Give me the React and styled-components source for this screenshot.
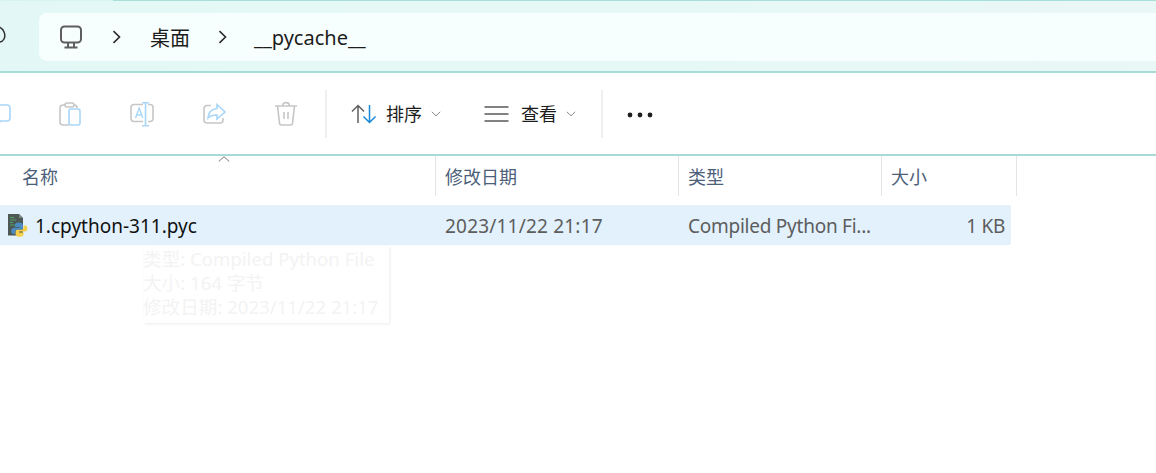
import React from 'react';
import styled, { createGlobalStyle } from 'styled-components';

const GlobalStyle = createGlobalStyle`
  html, body {
    margin: 0;
    padding: 0;
    background: #fff;
  }
  body {
    font-family: "Noto Sans", "Noto Sans CJK SC", sans-serif;
  }
`;

const Page = styled.div`
  position: relative;
  width: 1156px;
  height: 473px;
  overflow: hidden;
  background: #fff;
`;

const AddressStrip = styled.div`
  display: flex;
  align-items: center;
  box-sizing: border-box;
  height: 73px;
  padding: 3px 0 0 39px;
  background: linear-gradient(90deg, #e3f8f6 0%, #e6f8f6 60%, #e9f7f6 100%);
  border-bottom: 2px solid #a6dbd6;
  box-shadow: inset 0 1px 0 #d9f3ef;
`;

const TopEdge = styled.div`
  position: absolute;
  top: 0;
  left: 113px;
  right: 0;
  height: 1px;
  background: #a6e0d9;
`;

const BackIcon = styled.svg`
  position: absolute;
  top: 26px;
  left: -8px;
`;

const Crumbs = styled.div`
  display: flex;
  align-items: center;
  flex: 1;
  height: 48px;
  padding-left: 20px;
  border-radius: 8px 0 0 8px;
  background: #f7fffe;
`;

const CrumbText = styled.span`
  font-size: 20px;
  color: #1c1c1c;
  margin-left: ${p => p.$gap}px;
`;

const CrumbArrow = styled.svg`
  margin-left: ${p => p.$gap}px;
`;

const Toolbar = styled.div`
  display: flex;
  align-items: center;
  box-sizing: border-box;
  height: 83px;
  margin-left: -38px;
  border-bottom: 2px solid #a6dbd6;
`;

const ToolCell = styled.div`
  display: flex;
  align-items: center;
  justify-content: center;
  width: 72px;
  flex: none;
`;

const Divider = styled.div`
  width: 2px;
  height: 48px;
  flex: none;
  margin-left: ${p => p.$left}px;
  background: #efefef;
`;

const Menu = styled.div`
  display: flex;
  align-items: center;
  flex: none;
  margin-left: ${p => p.$left}px;
`;

const MenuLabel = styled.span`
  font-size: 18px;
  line-height: 24px;
  color: #1c1c1c;
  margin-left: ${p => p.$left}px;
`;

const MenuCaret = styled.svg`
  margin-left: 9px;
`;

const Dots = styled.svg`
  margin: 2px 0 0 24px;
  flex: none;
`;

const Columns = styled.div`
  display: grid;
  grid-template-columns: 436px 243px 203px 135px;
  height: 40px;
`;

const HeaderCell = styled.div`
  box-sizing: border-box;
  display: flex;
  align-items: center;
  padding-left: ${p => p.$pad}px;
  font-size: 18px;
  color: #4c607a;
  border-right: 1px solid #e5e5e5;
`;

const SortCaret = styled.svg`
  position: absolute;
  top: 156px;
  left: 218px;
`;

const Row = styled.div`
  display: grid;
  grid-template-columns: 436px 243px 203px 129px;
  align-items: center;
  width: 1011px;
  height: 40px;
  margin-top: 9px;
  border-radius: 0 2px 2px 0;
  background: #e2f1fc;
`;

const NameCell = styled.div`
  display: flex;
  align-items: center;
  padding-left: 7px;
  font-size: 19px;
  color: #111;
`;

const FileName = styled.span`
  margin: 2px 0 0 7px;
`;

const InfoCell = styled.div`
  box-sizing: border-box;
  padding: 2px ${p => p.$right || 0}px 0 ${p => p.$left || 0}px;
  font-size: 19px;
  letter-spacing: ${p => p.$track || 0}px;
  color: #5d5d5d;
  text-align: ${p => p.$align || 'left'};
  white-space: nowrap;
`;

const FadingTip = styled.div`
  position: absolute;
  top: 246px;
  left: 144px;
  box-sizing: border-box;
  width: 245px;
  height: 77px;
  padding-top: 1px;
  background: #fff;
  box-shadow: 1px 1px 3px rgba(0, 0, 0, 0.08);
  font-size: 18.6px;
  line-height: 24px;
  color: #f3f3f3;
  white-space: nowrap;
`;

const TipLine = styled.div`
  margin-left: -1px;
`;

const Chevron = ({ gap }) => (
  <CrumbArrow $gap={gap} width="9" height="14" viewBox="0 0 9 14">
    <path d="M1.5 1.2 L7.5 7 L1.5 12.8" fill="none" stroke="#2b2b2b" strokeWidth="1.6" />
  </CrumbArrow>
);

const Caret = () => (
  <MenuCaret width="10" height="6" viewBox="0 0 10 6">
    <path d="M0.8 0.8 L5 4.8 L9.2 0.8" fill="none" stroke="#8a8a8a" strokeWidth="1" />
  </MenuCaret>
);

const GRAY = '#c6c6c6';
const BLUE = '#a9d6f8';

const ToolIcon = ({ children }) => (
  <ToolCell>
    <svg width="30" height="30" viewBox="0 0 30 30" fill="none" strokeWidth="1.6">
      {children}
    </svg>
  </ToolCell>
);

const PythonFile = () => (
  <svg width="21" height="24" viewBox="0 0 21 24">
    <path d="M1 1 H12 L16 5 V22.5 H1 Z" fill="#4d5753" />
    <path d="M12 1 L16 5 H12 Z" fill="#7c8682" />
    <path d="M3 4.5 H7 M3 7 H9 M3 9.5 H6 M3 12 H8" stroke="#4fa36a" strokeWidth="1" />
    <path d="M12 9.5 C8.5 9.5 8 11 8 12.5 V14 H12.5 V14.8 H6.8 C5 14.8 4.2 16.2 4.2 18 C4.2 19.8 5 21 6.8 21 H8.2 V19 C8.2 17.6 9.2 16.8 10.6 16.8 H14 C15.2 16.8 16 16 16 14.8 V12.5 C16 10.5 14.5 9.5 12 9.5 Z" fill="#4a8cc2" />
    <path d="M12.5 23.8 C16 23.8 16.6 22.4 16.6 21 V19.4 H12 V18.6 H17.8 C19.6 18.6 20.4 17.2 20.4 15.4 C20.4 13.6 19.6 12.4 17.8 12.4 H16.6 V14.4 C16.6 15.8 15.4 16.8 14 16.8 H10.6 C9.4 16.8 8.6 17.6 8.6 18.8 V21 C8.6 22.9 10 23.8 12.5 23.8 Z" fill="#f6cf4a" />
  </svg>
);

export default function App() {
  return (
    <Page>
      <GlobalStyle />
      <AddressStrip>
        <Crumbs>
          <svg width="24" height="24" viewBox="0 0 24 24" fill="none" stroke="#5e5e5e" strokeWidth="2">
            <rect x="2" y="1.5" width="20" height="16" rx="3.5" />
            <path d="M9 18 V21.5 M15 18 V21.5 M5.5 22.5 H18.5" />
          </svg>
          <Chevron gap={29} />
          <CrumbText $gap={29}>桌面</CrumbText>
          <Chevron gap={28} />
          <CrumbText $gap={27}>__pycache__</CrumbText>
        </Crumbs>
      </AddressStrip>
      <TopEdge />
      <BackIcon width="14" height="20" viewBox="0 0 14 20">
        <path d="M7 1 C12 3 14 9 12 13 C11 15 9 16 7 16" fill="none" stroke="#333" strokeWidth="1.5" />
      </BackIcon>

      <Toolbar>
        <ToolIcon>
          <rect x="9" y="6" width="18" height="16" rx="3" stroke={BLUE} />
          <path d="M13 22 V26 L18 22" stroke={BLUE} />
        </ToolIcon>
        <ToolIcon>
          <path d="M14 26 H8 a3 3 0 0 1 -3 -3 V9 a3 3 0 0 1 3 -3 H10 M19 6 H19.5 a3 3 0 0 1 2.5 3" stroke={GRAY} />
          <rect x="10" y="4" width="9" height="4" rx="2" stroke={GRAY} />
          <rect x="14" y="10" width="11" height="16" rx="2" stroke={BLUE} />
        </ToolIcon>
        <ToolIcon>
          <path d="M16 5.5 H7 a3 3 0 0 0 -3 3 V19.5 a3 3 0 0 0 3 3 H16 M21 5.5 H23 a3 3 0 0 1 3 3 V19.5 a3 3 0 0 1 -3 3 H21" stroke={GRAY} />
          <path d="M18.5 4 V26.5 M15 3.8 H22 M15 26.7 H22" stroke={BLUE} />
          <path d="M8.5 19 L12.2 9 L15.8 19 M10 16 H14.5" stroke={BLUE} strokeWidth="1.4" />
        </ToolIcon>
        <ToolIcon>
          <path d="M12 6.5 H8 a3 3 0 0 0 -3 3 V21 a3 3 0 0 0 3 3 H21 a3 3 0 0 0 3 -3 V19" stroke={GRAY} />
          <path d="M18 5.5 L26 13 L18 20 V16 C14 16 11 17 9 19 C9.5 13 13 10 18 9.5 Z" stroke={BLUE} />
        </ToolIcon>
        <ToolIcon>
          <path d="M4 7 H26 M11.5 7 C11.5 2.5 18.5 2.5 18.5 7" stroke={GRAY} />
          <path d="M6.5 7 L8.5 24 a2 2 0 0 0 2 2 H19.5 a2 2 0 0 0 2 -2 L23.5 7 M13 13 V20 M17 13 V20" stroke={GRAY} />
        </ToolIcon>

        <Divider $left={3} />
        <Menu $left={24}>
          <svg width="28" height="20" viewBox="0 0 28 20" fill="none" strokeWidth="1.5">
            <path d="M7 19 V1.5 M1 7.5 L7 1.5 L13 7.5" stroke="#5f5f5f" />
            <path d="M18.5 1 V18.5 M12.5 12.5 L18.5 18.5 L24.5 12.5" stroke="#1a86d8" />
          </svg>
          <MenuLabel $left={7}>排序</MenuLabel>
          <Caret />
        </Menu>
        <Menu $left={43}>
          <svg width="25" height="16" viewBox="0 0 25 16" fill="none" stroke="#5a5a5a" strokeWidth="1.4">
            <path d="M0.5 1 H24.5 M0.5 8 H24.5 M0.5 15 H24.5" />
          </svg>
          <MenuLabel $left={12}>查看</MenuLabel>
          <Caret />
        </Menu>
        <Divider $left={25} />
        <Dots width="26" height="6" viewBox="0 0 26 6" fill="#1f1f1f">
          <circle cx="3" cy="3" r="2.4" />
          <circle cx="13" cy="3" r="2.4" />
          <circle cx="23" cy="3" r="2.4" />
        </Dots>
      </Toolbar>

      <Columns>
        <HeaderCell $pad={22}>名称</HeaderCell>
        <HeaderCell $pad={9}>修改日期</HeaderCell>
        <HeaderCell $pad={9}>类型</HeaderCell>
        <HeaderCell $pad={9}>大小</HeaderCell>
      </Columns>
      <SortCaret width="12" height="6" viewBox="0 0 12 6">
        <path d="M0.8 5.4 L6 0.8 L11.2 5.4" fill="none" stroke="#7a7a7a" strokeWidth="1" />
      </SortCaret>

      <Row>
        <NameCell>
          <PythonFile />
          <FileName>1.cpython-311.pyc</FileName>
        </NameCell>
        <InfoCell $left={9} $track={0.2}>2023/11/22 21:17</InfoCell>
        <InfoCell $left={9} $track={-0.25}>Compiled Python Fi...</InfoCell>
        <InfoCell $align="right" $right={6} $track={-0.3}>1 KB</InfoCell>
      </Row>

      <FadingTip>
        <TipLine>类型: Compiled Python File</TipLine>
        <TipLine>大小: 164 字节</TipLine>
        <TipLine>修改日期: 2023/11/22 21:17</TipLine>
      </FadingTip>
    </Page>
  );
}
